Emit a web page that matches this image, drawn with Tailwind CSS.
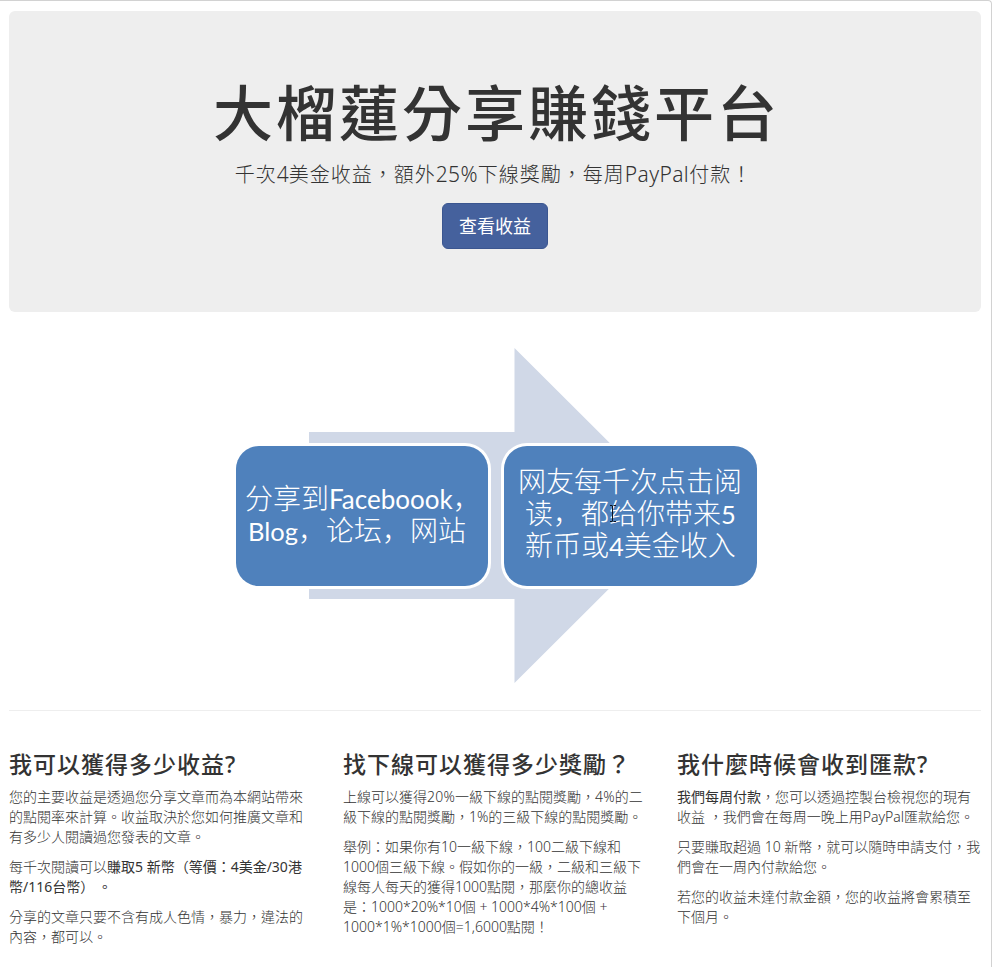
<!DOCTYPE html>
<html lang="zh-Hant">
<head>
  <meta charset="UTF-8">
  <title>大榴蓮分享賺錢平台</title>
  <script src="https://cdn.jsdelivr.net/npm/@tailwindcss/browser@4"></script>
</head>
<body class="bg-white text-[#333] font-['Noto_Sans','Noto_Sans_CJK_TC',sans-serif]">
  <div class="h-[967px] overflow-hidden border-t border-r border-[#d2d2d2] rounded-tr pt-2.5 pl-[9px] pr-2.5">

    <!-- hero -->
    <div class="h-[301px] rounded-md bg-[#eee] pt-[68px] flex flex-col items-center whitespace-nowrap">
      <h1 class="pl-[3px] text-[60px] leading-[69px] font-medium tracking-[3px]">大榴蓮分享賺錢平台</h1>
      <p class="mt-[11px] pr-[3px] text-[20px] leading-[30px] font-light tracking-[1px]">千次<span class="text-[21px] tracking-normal">4</span>美金收益，額外<span class="text-[21px] tracking-[.3px]">25%</span>下線獎勵，每周<span class="text-[21px] tracking-[.4px]">PayPal</span>付款！</p>
      <a href="#" class="mt-[13px] w-[106px] h-[46px] rounded-md border border-[#3b5690] bg-[#45619d] text-white text-lg leading-[44px] text-center">查看收益</a>
    </div>

    <!-- how it works -->
    <div class="relative h-[398px] pt-[134px] pl-[227px] flex items-start gap-4" lang="zh-Hans">
      <svg class="absolute left-[300px] top-9" width="374" height="336" viewBox="0 0 374 336" fill="#d0d8e7">
        <path d="M0 84H205.500V0L373.500 167.500L205.500 335V251H0Z"/>
      </svg>
      <div class="relative w-[252px] h-[140px] rounded-[23px] bg-[#4f81bc] ring-3 ring-white pt-[35px] pl-[9px] text-white text-[28px] leading-8 font-light whitespace-nowrap font-['Noto_Sans_CJK_SC',sans-serif]">
        <div class="h-8">分享到<span class="font-['Lato'] font-normal text-[26px]">Faceboook</span>，</div>
        <div class="h-8 pl-[3px]"><span class="font-['Lato'] font-normal text-[25.500px]">Blog</span>，论坛，网站</div>
      </div>
      <div class="relative w-[253px] h-[140px] rounded-[23px] bg-[#4f81bc] ring-3 ring-white pt-[18px] pl-[14px] text-white text-[28px] leading-8 font-light whitespace-nowrap font-['Noto_Sans_CJK_SC',sans-serif]">
        <div class="h-8">网友每千次点击阅</div>
        <div class="h-8 pl-[7px]">读，都给你带来<span class="font-['Lato'] font-normal text-[25.500px]">5</span></div>
        <div class="h-8 pl-[7px]">新币或<span class="font-['Lato'] font-normal text-[25.500px]">4</span>美金收入</div>
        <!-- text cursor -->
        <svg class="absolute left-[105px] top-[59px]" width="8" height="17" viewBox="0 0 8 17" fill="none" stroke="#0d1420">
          <path d="M1 .5H3.500M4.500 .5H7M3.500 1V16M1 16.500H3.500M4.500 16.500H7"/>
        </svg>
      </div>
    </div>

    <hr class="border-[#eee]">

    <!-- faq -->
    <div class="mt-[40px] grid grid-cols-3 gap-[30px] text-sm leading-5 font-light whitespace-nowrap">
      <div>
        <h3 class="text-[23px] tracking-[1px] leading-[26px] font-medium mb-2.5">我可以獲得多少收益?</h3>
        <p class="mb-2.5">您的主要收益是透過您分享文章而為本網站帶來<br>的點閱率來計算。收益取決於您如何推廣文章和<br>有多少人閱讀過您發表的文章。</p>
        <p class="mb-2.5">每千次閱讀可以<span class="font-normal">賺取5 新幣（等價：4美金/30港<br>幣/116台幣） 。</span></p>
        <p>分享的文章只要不含有成人色情，暴力，違法的<br>內容，都可以。</p>
      </div>
      <div>
        <h3 class="text-[23px] tracking-[1px] leading-[26px] font-medium mb-2.5">找下線可以獲得多少獎勵？</h3>
        <p class="mb-2.5">上線可以獲得<span class="tracking-[.2px]">20%</span>一級下線的點閱獎勵，<span class="tracking-[.2px]">4%</span>的二<br>級下線的點閱獎勵，1%的三級下線的點閱獎勵。</p>
        <p>舉例：如果你有10一級下線，100二級下線和<br>1000個三級下線。假如你的一級，二級和三級下<br>線每人每天的獲得1000點閱，那麼你的總收益<br>是：1000*20%*10個 + 1000*4%*100個 +<br>1000*1%*1000個=1,6000點閱！</p>
      </div>
      <div>
        <h3 class="text-[23px] tracking-[1px] leading-[26px] font-medium mb-2.5">我什麼時候會收到匯款?</h3>
        <p class="mb-2.5"><span class="font-normal">我們每周付款</span>，您可以透過控製台檢視您的現有<br>收益 ，我們會在每周一晚上用PayPal匯款給您。</p>
        <p class="mb-2.5">只要賺取超過 10 新幣，就可以隨時申請支付，我<br>們會在一周內付款給您。</p>
        <p>若您的收益未達付款金額，您的收益將會累積至<br>下個月。</p>
      </div>
    </div>
  </div>
</body>
</html>
